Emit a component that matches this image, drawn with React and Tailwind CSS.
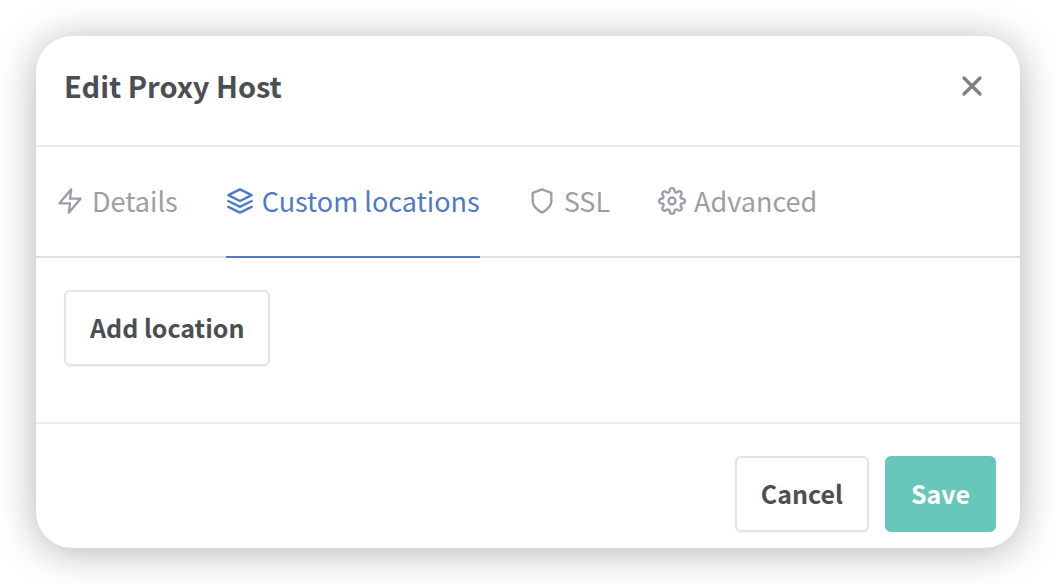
import React, { useState } from 'react';
import { FiLayers, FiSettings, FiShield, FiX, FiZap } from 'react-icons/fi';

const tabs = [
  { id: 'details', label: 'Details', icon: FiZap },
  { id: 'locations', label: 'Custom locations', icon: FiLayers },
  { id: 'ssl', label: 'SSL', icon: FiShield },
  { id: 'advanced', label: 'Advanced', icon: FiSettings },
];

const App = () => {
  const [activeTab, setActiveTab] = useState('locations');

  return (
    <main className="min-h-screen bg-white p-9 font-['Noto_Sans_CJK_SC',sans-serif]">
      <div
        role="dialog"
        aria-labelledby="dialog-title"
        className="rounded-[36px] bg-white text-[#4b4e52] shadow-[0_4px_40px_rgba(0,0,0,0.3)]"
      >
        <header className="flex items-start justify-between border-b-2 border-[#ecedef] px-7 pt-[30px] pb-[39px]">
          <h1 id="dialog-title" className="text-[29px] leading-[38px] font-bold">Edit Proxy Host</h1>
          <button type="button" aria-label="Close" className="p-1 text-[#808080]">
            <FiX className="h-8 w-8" strokeWidth={2.5} />
          </button>
        </header>

        {/* Tabs */}
        <nav className="flex gap-12 border-b-2 border-[#dfe0e1] px-5">
          {tabs.map(({ id, label, icon: Icon }) => (
            <button
              key={id}
              type="button"
              onClick={() => setActiveTab(id)}
              className={`-mb-[2px] flex items-center gap-2 border-b-2 pt-9 pb-[37px] text-[27px] leading-9 ${
                activeTab === id ? 'border-[#507ac5] text-[#507ac5]' : 'border-transparent text-[#9c9ea5]'
              }`}
            >
              <Icon className="h-7 w-7" />
              {label}
            </button>
          ))}
        </nav>

        <div className="border-b-2 border-[#ecedef] px-7 pt-8 pb-14">
          <button type="button" className="rounded-md border-2 border-[#e2e4e6] px-6 pt-[15px] pb-[17px] text-[25px] leading-10 font-bold shadow-xs">
            Add location
          </button>
        </div>

        <footer className="flex justify-end gap-4 px-6 pt-8 pb-4">
          <button type="button" className="rounded-md border-2 border-[#e2e4e6] px-6 pt-[15px] pb-[17px] text-[25px] leading-10 font-bold shadow-xs">
            Cancel
          </button>
          <button type="button" className="rounded-md border-2 border-[#66c7ba] bg-[#66c7ba] px-6 pt-[15px] pb-[17px] text-[25px] leading-10 font-bold text-white">
            Save
          </button>
        </footer>
      </div>
    </main>
  );
};

export default App;
